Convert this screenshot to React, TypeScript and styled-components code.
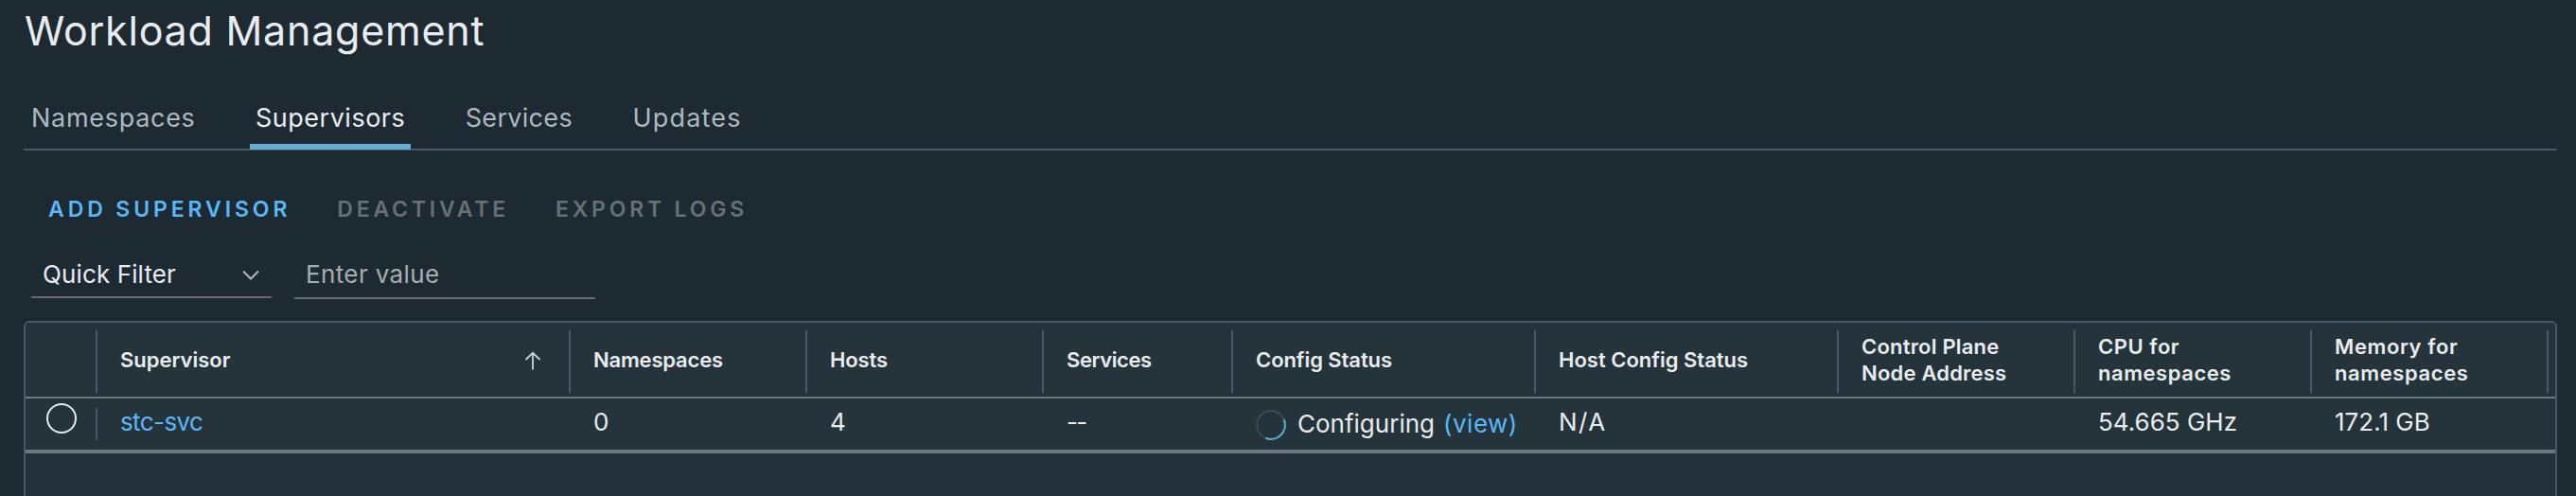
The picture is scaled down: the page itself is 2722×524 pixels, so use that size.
import React from 'react';
import styled, { createGlobalStyle } from 'styled-components';

const GlobalStyle = createGlobalStyle`
  * { box-sizing: border-box; }
  body {
    margin: 0;
    background: #1e2a32;
    color: #e9ecef;
    font-family: Inter, "Liberation Sans", sans-serif;
    overflow: hidden;
  }
`;

const Page = styled.main`
  height: 524px;
  display: flex;
  flex-direction: column;
  padding: 0 20px 0 25px;
  overflow: hidden;
`;

const Title = styled.h1`
  margin: 0 0 28px 1px;
  font-size: 43px;
  font-weight: 400;
  line-height: 64px;
  letter-spacing: 0.76px;
`;

const Tabs = styled.nav`
  display: flex;
  flex: none;
  gap: 51.5px;
  height: 67px;
  padding-left: 2px;
  border-bottom: 2px solid #4b5863;
`;

const Tab = styled.a<{ $active?: boolean; $spacing: number }>`
  height: 66px;
  padding: 5px 6px 0;
  border-bottom: 6px solid ${(p) => (p.$active ? '#65add3' : 'transparent')};
  color: ${(p) => (p.$active ? '#eaedf0' : '#acb9c1')};
  font-size: 27px;
  line-height: 56px;
  letter-spacing: ${(p) => p.$spacing}px;
  white-space: nowrap;
`;

const Actions = styled.div`
  display: flex;
  flex: none;
  gap: 49px;
  margin: 37px 0 18px 26px;
`;

const ActionButton = styled.button<{ $spacing: number }>`
  padding: 0;
  border: 0;
  background: none;
  color: #57b9f8;
  font: 600 23px/50px Inter, "Liberation Sans", sans-serif;
  letter-spacing: ${(p) => p.$spacing}px;
  &:disabled { color: #667076; }
`;

const Filters = styled.div`
  display: flex;
  flex: none;
  align-items: flex-start;
  gap: 24px;
  height: 52px;
  margin: 0 0 23px 8px;
  font-size: 26px;
  line-height: 47px;
`;

const Select = styled.div`
  display: flex;
  justify-content: space-between;
  width: 254px;
  height: 51px;
  padding: 2px 13px 0 12px;
  border-bottom: 2px solid #6c6a6a;
  letter-spacing: 0.12px;
`;

const Chevron = styled.svg`
  width: 18px;
  height: 11px;
  margin-top: 19px;
`;

const ValueInput = styled.input`
  width: 318px;
  height: 52px;
  padding: 1px 12px 0;
  border: 0;
  border-bottom: 2px solid #6c6a6a;
  outline: 0;
  background: none;
  color: #e9ecef;
  font: 400 26px Inter, "Liberation Sans", sans-serif;
  letter-spacing: 0.37px;
  &::placeholder { color: #a5aeb3; opacity: 1; }
`;

const Grid = styled.section`
  flex: 1;
  border: 2px solid #4b5863;
  border-bottom: 0;
  border-radius: 6px 6px 0 0;
  background: #25313a;
  overflow: hidden;
`;

const columns = '76px 500px 250px 250px 200px 320px 320px 250px 250px 250px';

const HeaderRow = styled.div`
  display: grid;
  grid-template-columns: ${columns};
  height: 80px;
  padding: 8px 0 4px;
  border-bottom: 2px solid #6c7980;
  background: #25343b;
`;

const HeaderCell = styled.div<{ $spacing?: number }>`
  display: flex;
  align-items: center;
  justify-content: space-between;
  padding: 0 29px 4px 24px;
  border-right: 2px solid #4b5863;
  font-size: 22px;
  font-weight: 600;
  line-height: 28px;
  letter-spacing: ${(p) => p.$spacing ?? 0}px;
  white-space: pre-line;
`;

const SortArrow = styled.svg`
  width: 18px;
  height: 20px;
  margin-top: 1px;
`;

const DataRow = styled.div`
  display: grid;
  grid-template-columns: ${columns};
  height: 58px;
  border-bottom: 4px solid #6c7980;
  background: #25343b;
`;

const Cell = styled.div<{ $spacing?: number }>`
  padding-left: 24px;
  font-size: 26px;
  line-height: 50px;
  letter-spacing: ${(p) => p.$spacing ?? 0}px;
  white-space: nowrap;
`;

const SelectCell = styled.div`
  height: 34px;
  margin-top: 10px;
  border-right: 2px solid #4b5863;
`;

const Radio = styled.div`
  width: 32px;
  height: 32px;
  margin: -5px 0 0 22px;
  border: 2px solid #e6ecef;
  border-radius: 50%;
`;

const StatusCell = styled(Cell)`
  display: flex;
  line-height: 53px;
`;

const Spinner = styled.svg`
  width: 32px;
  height: 32px;
  margin: 12px 12px 0 0;
`;

const Link = styled.a<{ $spacing?: number }>`
  color: #57b9f8;
  letter-spacing: ${(p) => p.$spacing ?? 0}px;
`;

const ViewLink = styled(Link)`
  margin-left: 9px;
`;

const tabs = [
  { label: 'Namespaces', spacing: 0.7 },
  { label: 'Supervisors', spacing: 0.5, active: true },
  { label: 'Services', spacing: 0.3 },
  { label: 'Updates', spacing: 1.2 },
];

const headers = [
  { label: 'Namespaces', spacing: -0.18 },
  { label: 'Hosts', spacing: -0.12 },
  { label: 'Services', spacing: -0.4 },
  { label: 'Config Status', spacing: -0.07 },
  { label: 'Host Config Status', spacing: 0 },
  { label: 'Control Plane\nNode Address', spacing: 0.2 },
  { label: 'CPU for\nnamespaces', spacing: 0.55 },
  { label: 'Memory for\nnamespaces', spacing: 0.6 },
];

export default function App() {
  return (
    <Page>
      <GlobalStyle />
      <Title>Workload Management</Title>
      <Tabs>
        {tabs.map((tab) => (
          <Tab key={tab.label} $active={tab.active} $spacing={tab.spacing}>
            {tab.label}
          </Tab>
        ))}
      </Tabs>
      <Actions>
        <ActionButton $spacing={3.9}>ADD SUPERVISOR</ActionButton>
        <ActionButton $spacing={3.8} disabled>DEACTIVATE</ActionButton>
        <ActionButton $spacing={3.8} disabled>EXPORT LOGS</ActionButton>
      </Actions>
      <Filters>
        <Select>
          Quick Filter
          <Chevron viewBox="0 0 18 11" fill="none" stroke="#b3b6b8" strokeWidth="2">
            <path d="M1 1.5 9 9.5 17 1.5" />
          </Chevron>
        </Select>
        <ValueInput placeholder="Enter value" />
      </Filters>
      <Grid>
        <HeaderRow>
          <HeaderCell />
          <HeaderCell>
            Supervisor
            <SortArrow viewBox="0 0 18 20" fill="none" stroke="#ccd3d8" strokeWidth="1.8">
              <path d="M1.5 9 9 1.8 16.5 9M9 2V19.5" />
            </SortArrow>
          </HeaderCell>
          {headers.map((header) => (
            <HeaderCell key={header.label} $spacing={header.spacing}>
              {header.label}
            </HeaderCell>
          ))}
        </HeaderRow>
        <DataRow>
          <SelectCell>
            <Radio />
          </SelectCell>
          <Cell>
            <Link $spacing={-0.6}>stc-svc</Link>
          </Cell>
          <Cell>0</Cell>
          <Cell>4</Cell>
          <Cell $spacing={-1.8}>--</Cell>
          <StatusCell>
            <Spinner viewBox="0 0 32 32" fill="none" strokeWidth="2.2">
              <circle cx="16" cy="16" r="14.8" stroke="#3a4852" />
              <path d="M29.7 10.4A14.8 14.8 0 0 1 10.4 29.7" stroke="#5ba7d2" />
            </Spinner>
            Configuring
            <ViewLink $spacing={0.5}>(view)</ViewLink>
          </StatusCell>
          <Cell $spacing={1.5}>N/A</Cell>
          <Cell />
          <Cell>54.665 GHz</Cell>
          <Cell>172.1 GB</Cell>
        </DataRow>
      </Grid>
    </Page>
  );
}
